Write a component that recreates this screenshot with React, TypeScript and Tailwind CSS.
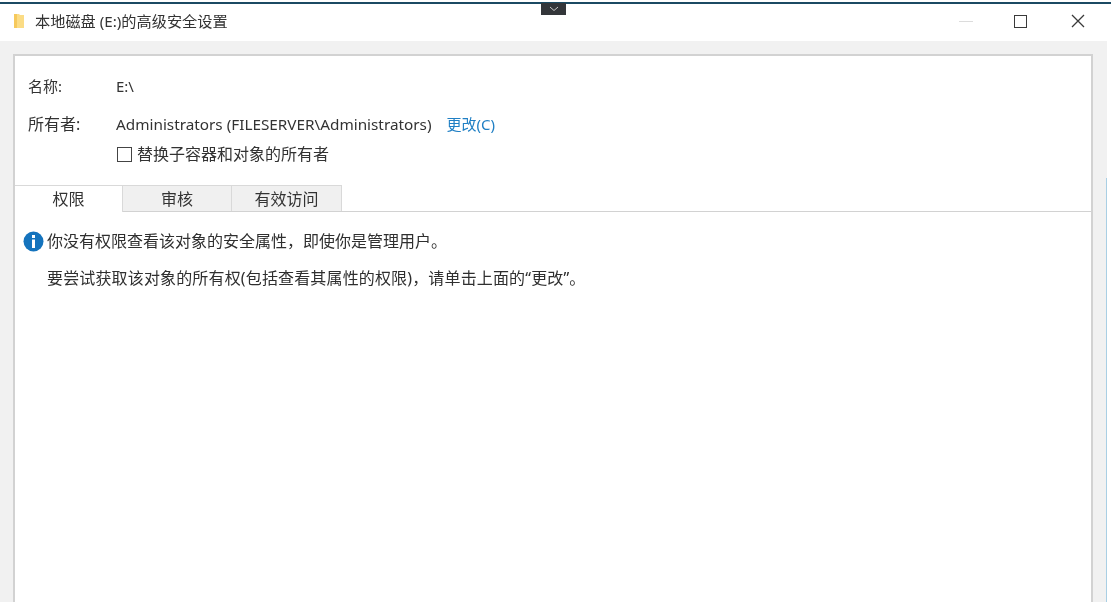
import React from "react";

const font = { fontFamily: '"Noto Sans", "Noto Sans CJK SC", sans-serif' };

function Tab({ label, active, w }: { label: string; active?: boolean; w: string }) {
  return (
    <div
      className={`${w} flex items-center justify-center border-t border-r border-[#d9d9d9] text-[16px] text-[#333] ${
        active ? "h-[27px] bg-white relative z-10 -mb-px" : "h-[26px] bg-[#f0f0f0] border-b-0"
      }`}
    >
      {label}
    </div>
  );
}

export default function App() {
  return (
    <div
      className="relative w-[1111px] h-[602px] overflow-hidden bg-white text-[16px] leading-[20px] text-[#2b2b2b] flex flex-col blur-[0.4px]"
      style={font}
    >
      <div className="absolute left-[541px] top-[3px] w-[25px] h-[12px] bg-[#33363a] flex items-center justify-center z-20">
        <svg width="10" height="6" viewBox="0 0 10 6" fill="none" stroke="#c8c8c8" strokeWidth="1">
          <path d="M1 1l4 3.5L9 1" />
        </svg>
      </div>

      <div className="h-[2px] bg-white shrink-0" />
      <div className="h-[2px] bg-[#1b4a63] shrink-0" />

      <div className="h-[37px] shrink-0 flex items-center pl-[13px] pr-[26px] pb-[3px]">
        <svg width="12" height="16" viewBox="0 0 12 16" className="mr-[10px]">
          <path d="M1 1h5l1 1h4v13H1z" fill="#fbdc85" />
          <path d="M1 1h3v14H1z" fill="#f6c95c" />
        </svg>
        <span className="text-[15.2px] text-[#333]">本地磁盘 (E:)的高级安全设置</span>
        <div className="ml-auto flex items-center">
          <div className="w-[14px] h-px bg-[#dcdcdc] mr-[41px]" />
          <div className="w-[13px] h-[13px] border-[1.5px] border-[#3a3a3a] mr-[44px]" />
          <svg width="14" height="14" viewBox="0 0 14 14" stroke="#3a3a3a" strokeWidth="1.3">
            <path d="M1 1l12 12M13 1L1 13" />
          </svg>
        </div>
      </div>

      <div className="flex-1 min-h-0 flex bg-[#f1f1f1]">
        <div className="w-[13px] shrink-0" />
        <div className="w-[1080px] shrink-0 pt-[13px] flex flex-col">
          <div className="flex-1 bg-white border-l-2 border-r-2 border-t-2 border-[#d2d2d2] flex flex-col">
            <div className="h-[129px] shrink-0 pl-[13px] text-[#333]">
              <div className="flex h-[20px] mt-[20px] items-center">
                <span className="w-[88px] text-[15px]">名称:</span>
                <span className="text-[15px]">E:\</span>
              </div>
              <div className="flex h-[20px] mt-[18px] items-center">
                <span className="w-[88px] text-[16px]">所有者:</span>
                <span className="text-[15.3px] text-[#333]">Administrators (FILESERVER\Administrators)</span>
                <span className="ml-[15px] text-[15px] text-[#1f7fc4]">更改(C)</span>
              </div>
              <div className="flex h-[20px] mt-[10px] items-center pl-[89px]">
                <span className="w-[15px] h-[15px] border border-[#444] bg-white mr-[5px] shrink-0" />
                <span>替换子容器和对象的所有者</span>
              </div>
            </div>
            <div className="h-[27px] shrink-0 flex border-b border-[#d2d2d2] items-end">
              <Tab label="权限" active w="w-[108px]" />
              <Tab label="审核" w="w-[109px]" />
              <Tab label="有效访问" w="w-[110px]" />
            </div>
            <div className="flex-1 pl-[8px] pt-[19px] text-[#2f2f2f]">
              <div className="flex items-center h-[20px]">
                <svg width="21" height="21" viewBox="0 0 21 21" className="shrink-0 mr-[3px]">
                  <circle cx="10.5" cy="10.5" r="10" fill="#1473bd" />
                  <rect x="9" y="4" width="3" height="3" fill="#fff" />
                  <rect x="9" y="8.5" width="3" height="8.5" fill="#fff" />
                </svg>
                <span>你没有权限查看该对象的安全属性，即使你是管理用户。</span>
              </div>
              <div className="mt-[17px] pl-[24px] tracking-[0.15px]">要尝试获取该对象的所有权(包括查看其属性的权限)，请单击上面的“更改”。</div>
            </div>
          </div>
        </div>
        <div className="w-[13px] shrink-0" />
        <div className="w-px shrink-0 mt-[137px] bg-[#a9cfe4]" />
        <div className="flex-1 bg-white" />
      </div>
    </div>
  );
}
